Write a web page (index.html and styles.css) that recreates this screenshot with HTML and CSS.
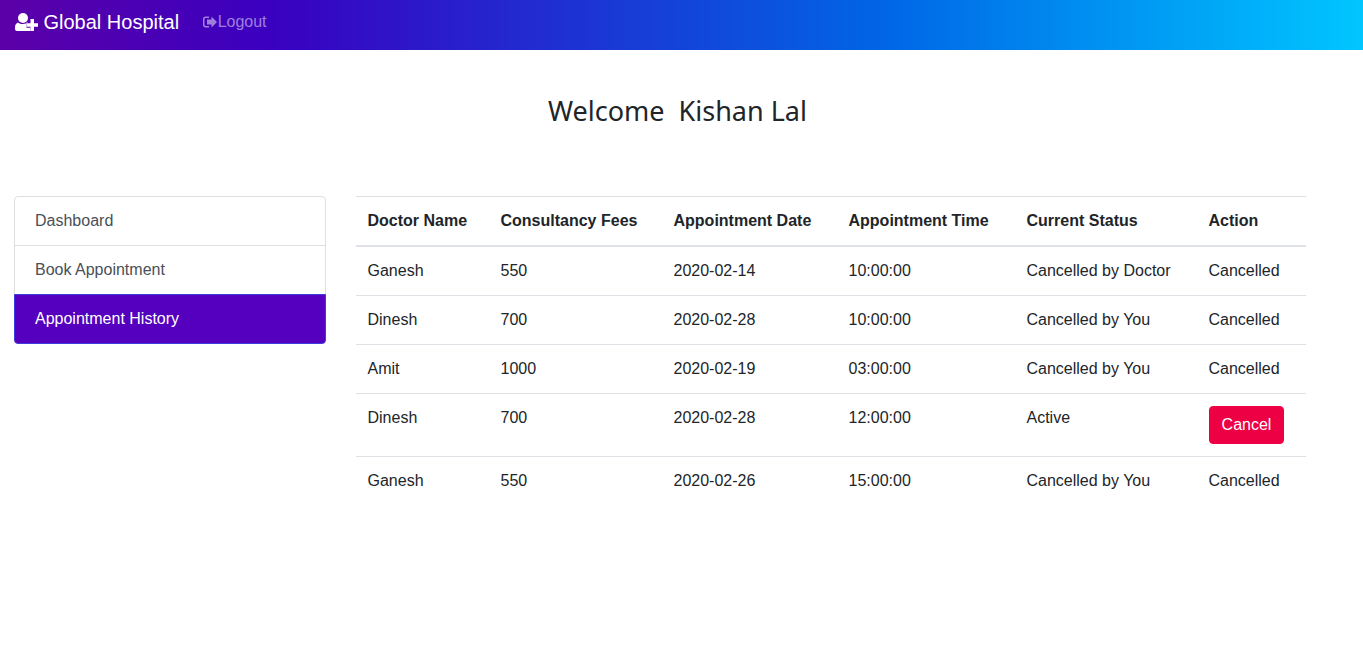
FILE: index.html
```html
<!DOCTYPE html>
<html lang="en">
<head>
<meta charset="utf-8">
<title>Global Hospital</title>
<link rel="stylesheet" href="styles.css">
</head>
<body>
<nav class="navbar">
  <a class="brand" href="#">
    <svg class="brand-icon" viewBox="0 0 23 18" aria-hidden="true">
      <circle fill="currentColor" cx="8" cy="5" r="5"/>
      <path fill="currentColor" d="M3 9.500C1.200 10.100 0 11.800 0 14.300V15.800C0 17.200 .8 18 2.200 18H15.500V14.700H11.500V9.600H13.200C11.800 10.500 10 11 8 11C6.100 11 4.400 10.500 3 9.500Z"/>
      <path fill="currentColor" d="M15.500 6H19V10.300H23V13.700H19V18H15.500V13.700H11.500V10.300H15.500Z"/>
    </svg>
    Global Hospital
  </a>
  <a class="logout" href="#">
    <svg class="logout-icon" viewBox="0 0 14 12" aria-hidden="true">
      <path fill="currentColor" d="M2.500 .5H6V2H2.700C2 2 1.500 2.500 1.500 3.200V8.800C1.500 9.500 2 10 2.700 10H6V11.500H2.500C1 11.500 0 10.500 0 9V3C0 1.500 1 .5 2.500 .5Z"/>
      <path fill="currentColor" d="M8.500 .5L14 6L8.500 11.500V8.500H4V3.500H8.500Z"/>
    </svg>Logout
  </a>
</nav>
<h3 class="welcome">Welcome &nbsp;Kishan Lal</h3>
<main class="layout">
  <aside class="side-list">
    <a class="side-item" href="#">Dashboard</a>
    <a class="side-item" href="#">Book Appointment</a>
    <a class="side-item active" href="#">Appointment History</a>
  </aside>
  <table class="history">
    <thead>
      <tr><th>Doctor Name</th><th>Consultancy Fees</th><th>Appointment Date</th><th>Appointment Time</th><th>Current Status</th><th>Action</th></tr>
    </thead>
    <tbody>
      <tr><td>Ganesh</td><td>550</td><td>2020-02-14</td><td>10:00:00</td><td>Cancelled by Doctor</td><td>Cancelled</td></tr>
      <tr><td>Dinesh</td><td>700</td><td>2020-02-28</td><td>10:00:00</td><td>Cancelled by You</td><td>Cancelled</td></tr>
      <tr><td>Amit</td><td>1000</td><td>2020-02-19</td><td>03:00:00</td><td>Cancelled by You</td><td>Cancelled</td></tr>
      <tr><td>Dinesh</td><td>700</td><td>2020-02-28</td><td>12:00:00</td><td>Active</td><td><button class="cancel" type="button">Cancel</button></td></tr>
      <tr><td>Ganesh</td><td>550</td><td>2020-02-26</td><td>15:00:00</td><td>Cancelled by You</td><td>Cancelled</td></tr>
    </tbody>
  </table>
</main>
</body>
</html>
```
FILE: styles.css
```css
* { box-sizing: border-box; }
body {
  margin: 0;
  font-family: "Liberation Sans", Arial, sans-serif;
  font-size: 16px;
  line-height: 24px;
  color: #212529;
  background: #fff;
}
a { text-decoration: none; }
.navbar {
  height: 50px;
  display: flex;
  align-items: flex-start;
  padding-left: 15px;
  background: linear-gradient(to right, #5b00a8, #3a00c0 20%, #0066e6 65%, #00c6ff);
}
.brand {
  display: flex;
  align-items: center;
  gap: 5.5px;
  height: 44px;
  font-size: 20px;
  color: #fff;
}
.brand-icon { width: 23px; height: 18px; }
.logout {
  display: flex;
  align-items: center;
  height: 44px;
  margin-left: 23.5px;
  color: rgba(255, 255, 255, 0.5);
}
.logout-icon { width: 14px; height: 12px; margin-right: 1px; }
.welcome {
  margin: 0;
  padding: 44px 8px 0 0;
  height: 146px;
  text-align: center;
  font-family: "Noto Sans", sans-serif;
  font-weight: 400;
  font-size: 27px;
  line-height: 34px;
}
.layout {
  display: flex;
  align-items: flex-start;
  padding: 0 57px 0 14px;
}
.side-list {
  flex: 0 0 312px;
  display: flex;
  flex-direction: column;
}
.side-item {
  height: 50px;
  margin-bottom: -1px;
  padding: 12px 20px;
  color: #495057;
  border: 1px solid #dfdfdf;
}
.side-item:first-child { border-radius: 4px 4px 0 0; }
.side-item.active {
  margin-bottom: 0;
  color: #fff;
  background: #5500bf;
  border-color: #3d3de0;
  border-radius: 0 0 4px 4px;
}
.history {
  flex: 0 0 950px;
  margin-left: 29.5px;
  border-collapse: collapse;
  table-layout: fixed;
}
.history th, .history td {
  padding: 12px;
  text-align: left;
  vertical-align: top;
  border-top: 1px solid #dee2e6;
}
.history th { border-bottom: 2px solid #dee2e6; font-weight: 700; vertical-align: bottom; }
.history th:nth-child(1) { width: 133px; }
.history th:nth-child(2) { width: 173px; }
.history th:nth-child(3) { width: 175px; }
.history th:nth-child(4) { width: 178px; }
.history th:nth-child(5) { width: 182px; }
.history th:nth-child(6) { width: 109px; }
.cancel {
  display: block;
  width: 75px;
  height: 38px;
  padding: 0 0 0 1px;
  border: 1px solid #ee0044;
  border-radius: 4px;
  background: #ee0044;
  color: #fff;
  font: inherit;
}
```
